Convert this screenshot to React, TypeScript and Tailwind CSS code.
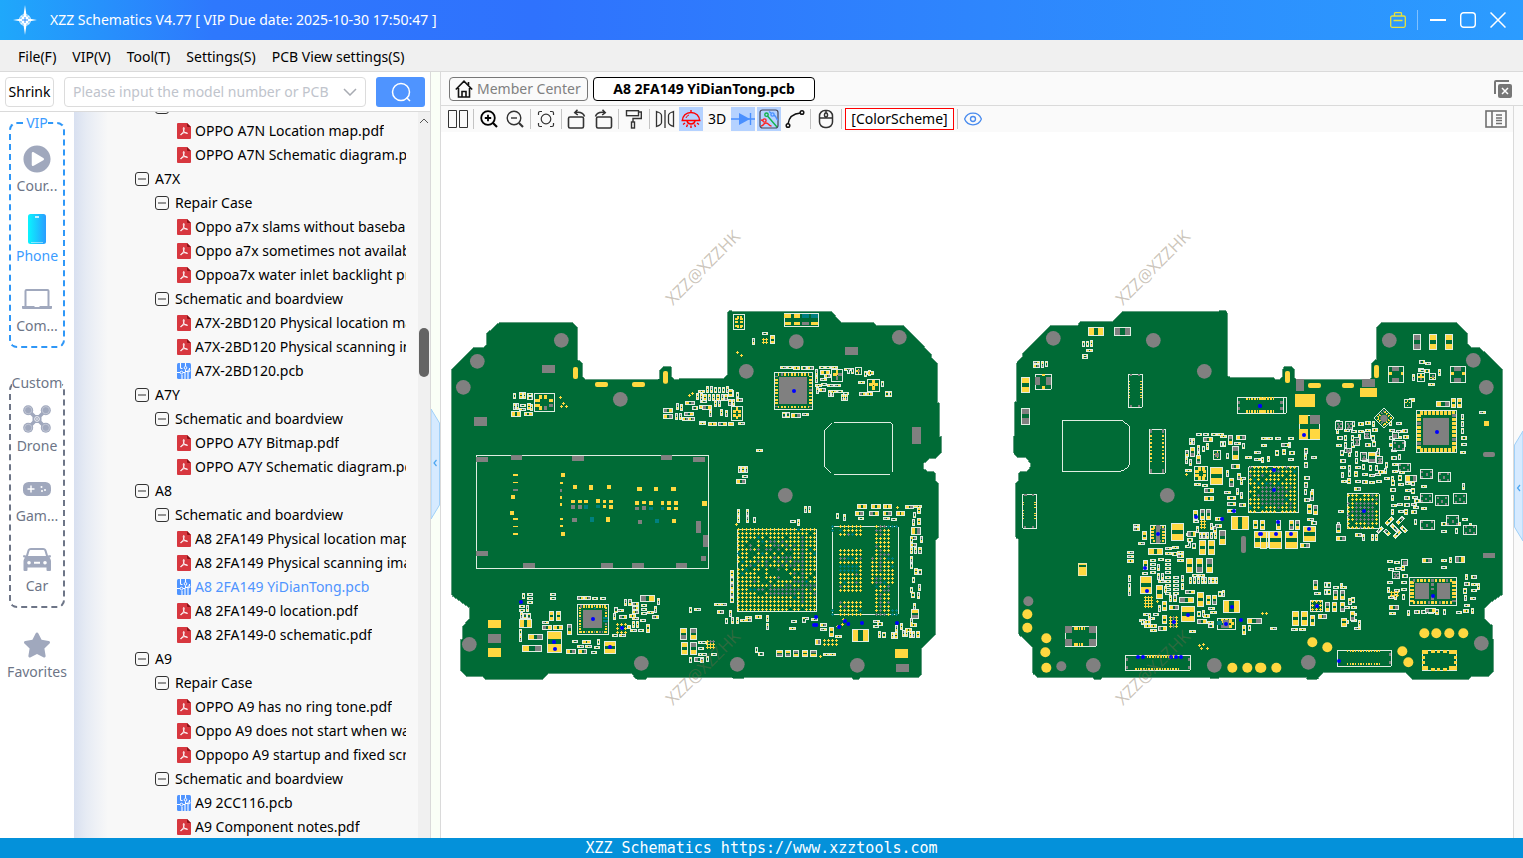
import React from "react";
import { Eye } from "lucide-react";
import { FaPlayCircle, FaStar } from "react-icons/fa";

/* ------------------------------------------------------------------ */
/* Board drawing                                                       */
/* ------------------------------------------------------------------ */

const GREEN = "#006b36";
const YELLOW = "#ffd840";
const GRAY = "#808080";
const WHITE = "#e0ede2";
const TEAL = "#008080";
const BLUE = "#0000ff";

type Rect = [number, number, number, number];

const noise = (a: number, b: number) => {
  const v = Math.sin(a * 12.9898 + b * 78.233) * 43758.5453;
  return v - Math.floor(v);
};

const nums = (s: string) => s.trim().split(/[ ,]+/).map(Number);

const pairs = (s: string): [number, number][] => {
  const n = nums(s);
  const out: [number, number][] = [];
  for (let i = 0; i + 1 < n.length; i += 2) out.push([n[i], n[i + 1]]);
  return out;
};

const quads = (s: string): Rect[] => {
  const n = nums(s);
  const out: Rect[] = [];
  for (let i = 0; i + 3 < n.length; i += 4) out.push([n[i], n[i + 1], n[i + 2], n[i + 3]]);
  return out;
};

const shift = (s: string, dx: number) => pairs(s).map(([x, y]) => `${x + dx},${y}`).join(" ");

const box = ([x, y, w, h]: Rect) => `M${x} ${y}h${w}v${h}h${-w}z`;

/** Two-terminal parts: outline, body and a pad at either end. */
function Chips({ list, tone = "mix" }: { list: Rect[]; tone?: "mix" | "yellow" | "gray" }) {
  let white = "";
  let body = "";
  let yellow = "";
  let gray = "";
  list.forEach((r) => {
    const [x, y, w, h] = r;
    white += box(r);
    const i: Rect = [x + 3, y + 3, w - 6, h - 6];
    body += box(i);
    const vert = h > w;
    const p = Math.max(4, Math.round((vert ? i[3] : i[2]) * 0.36));
    const a: Rect = vert ? [i[0], i[1], i[2], p] : [i[0], i[1], p, i[3]];
    const b: Rect = vert ? [i[0], i[1] + i[3] - p, i[2], p] : [i[0] + i[2] - p, i[1], p, i[3]];
    const n = noise(x, y);
    const ga = tone === "gray" || (tone === "mix" && n < 0.28);
    const gb = tone === "gray" || (tone === "mix" && n > 0.68);
    if (ga) gray += box(a);
    else yellow += box(a);
    if (gb) gray += box(b);
    else yellow += box(b);
  });
  return (
    <g>
      <path d={white} fill={WHITE} />
      <path d={body} fill={GREEN} />
      <path d={yellow} fill={YELLOW} />
      <path d={gray} fill={GRAY} />
    </g>
  );
}

/** Small parts given by centre; upright ones and flat ones apart. */
function Smalls({ v = "", h = "" }: { v?: string; h?: string }) {
  const list: Rect[] = [
    ...(v ? pairs(v).map(([x, y]): Rect => [x - 5, y - 10, 10, 20]) : []),
    ...(h ? pairs(h).map(([x, y]): Rect => [x - 10, y - 5, 20, 10]) : []),
  ];
  return <Chips list={list} />;
}

/** A crowded area of small parts. */
function Crowd({ areas, fill = 0.72 }: { areas: string; fill?: number }) {
  const list: Rect[] = [];
  quads(areas).forEach(([x0, y0, w, h]) => {
    for (let y = y0; y < y0 + h - 8; y += 21)
      for (let x = x0; x < x0 + w - 8; x += 21) {
        const n = noise(x + 3, y + 7);
        if (n > fill) continue;
        const jx = Math.round(noise(y, x) * 4);
        const jy = Math.round(noise(x, y) * 4);
        if (n < fill / 2) list.push([x + jx, y + jy, 10, 18]);
        else list.push([x + jx, y + 4 + jy, 18, 10]);
      }
  });
  return <Chips list={list} />;
}

/** Square package with leads on the four sides and a thermal pad. */
function Quad({ r, pad, step = 12, lead = 6 }: { r: Rect; pad?: string; step?: number; lead?: number }) {
  const [x, y, w, h] = r;
  let yellow = "";
  let gray = "";
  const put = (b: Rect) => {
    if (noise(b[0], b[1]) > 0.84) gray += box(b);
    else yellow += box(b);
  };
  const d = Math.round(lead * 1.6);
  for (let i = x + step; i < x + w - step; i += step) {
    put([i, y + 3, lead, d]);
    put([i, y + h - d - 3, lead, d]);
  }
  for (let j = y + step; j < y + h - step; j += step) {
    put([x + 3, j, d, lead]);
    put([x + w - d - 3, j, d, lead]);
  }
  return (
    <g>
      <rect x={x} y={y} width={w} height={h} fill={GREEN} stroke={WHITE} strokeWidth={3} />
      <path d={yellow} fill={YELLOW} />
      <path d={gray} fill={GRAY} />
      {pad && <path d={quads(pad).map(box).join("")} fill={GRAY} />}
    </g>
  );
}

/** Ball grid. `tone` picks the net colour of a ball, or leaves it out. */
function Balls({ x, y, cols, rows, p, tone }: {
  x: number; y: number; cols: number; rows: number; p: number; tone: (c: number, r: number) => string;
}) {
  const d: Record<string, string> = { y: "", g: "", t: "" };
  for (let r = 0; r < rows; r++)
    for (let c = 0; c < cols; c++) {
      const t = tone(c, r);
      if (t === "") continue;
      const cx = x + c * p;
      const cy = y + r * p;
      d[t] += box([cx - 4.5, cy - 1.5, 9, 3]) + box([cx - 1.5, cy - 4.5, 3, 9]);
    }
  return (
    <g>
      <path d={d.y} fill={YELLOW} />
      <path d={d.g} fill={GRAY} />
      <path d={d.t} fill={TEAL} />
    </g>
  );
}

const Blocks = ({ d, fill }: { d: string; fill: string }) => <path d={quads(d).map(box).join("")} fill={fill} />;
const Frames = ({ d }: { d: string }) => (
  <path d={quads(d).map(box).join("")} fill="none" stroke={WHITE} strokeWidth={3} />
);
const Dots = ({ at, r, fill }: { at: string; r: number; fill: string }) => (
  <g fill={fill} shapeRendering="auto">
    {pairs(at).map(([x, y]) => (
      <circle key={`${x}-${y}`} cx={x} cy={y} r={r} />
    ))}
  </g>
);
const Crosses = ({ at }: { at: string }) => (
  <path d={pairs(at).map(([x, y]) => `M${x - 5} ${y}h10M${x} ${y - 5}v10`).join("")} stroke={YELLOW} strokeWidth={3} />
);
const Slots = ({ d, fill }: { d: string; fill: string }) => (
  <g fill={fill} shapeRendering="auto">
    {quads(d).map(([x, y, w, h]) => (
      <rect key={`${x}-${y}`} x={x} y={y} width={w} height={h} rx={6} />
    ))}
  </g>
);

const TOP_OUTLINE = [
  shift("162,68 382,68 397,82 397,177 412,190 412,230 420,238 640,238 645,232 645,210 655,199 678,199 680,230 688,238 700,238 705,236", 0),
  shift("72,235 82,225 82,38 88,31 103,35 395,35 423,67 520,67 528,76 610,76 694,162 694,172 713,191 713,308 718,308 718,408 725,410 725,458 708,475 690,475 670,492 670,505 682,514 700,514 707,520 707,542 716,551 716,712 707,720 707,1003 664,1045 664,1125 655,1133 482,1133 475,1138 460,1138 455,1133 135,1133 130,1136 100,1136 97,1133", 765),
  shift("608,1132 603,1138 575,1138 558,1120 310,1120 290,1140 123,1140 113,1129 65,1129 47,1113 47,1018 53,1016 53,978 74,956 74,924 22,888 20,880 20,208 85,143 115,143 125,132 125,100", 0),
].join(" ");

const BOTTOM_OUTLINE = [
  shift("137,76 218,76 226,65 322,65 352,35 640,35 645,31 660,31 667,38 667,225 675,232", 0),
  shift("40,232 47,238 60,238 67,230 67,208 75,199 95,199 103,207 103,232 110,238 330,238 335,230 335,190 350,177 350,82 365,68 590,68 623,100 623,132 635,143 660,143 728,208 728,883 690,908 673,925 673,956 698,978 698,1016 701,1018 701,1115 685,1129 635,1130 625,1138 457,1138 438,1118 190,1118 172,1138 142,1138 138,1132", 765),
  shift("645,1133 640,1136 618,1136 613,1133 293,1133 287,1138 268,1138 263,1133 98,1133 83,1120 83,1042 41,1003 41,720 32,712 32,550 41,540 41,520 47,514 66,514 77,500 77,490 62,474 40,474 26,460 26,408 29,406 29,305 35,303 35,188 53,170 53,160", 0),
].join(" ");

function TopLeft() {
  return (
    <g>
      <Dots at="349,121 97,184 55,262 526,298 73,1033 589,1090" r={22} fill={GRAY} />
      <Blocks d="291,195,39,24 87,351,39,26 129,1002,39,27" fill={GRAY} />
      <Blocks d="129,960,39,24 129,1044,39,27" fill={YELLOW} />
      <Slots d="384,201,15,36 450,246,39,15 561,246,39,15 654,213,15,38" fill={YELLOW} />
      <Frames d="94,466,697,339" />
      <Blocks d="94,471,35,15 198,465,33,15 381,468,36,15 648,465,33,15 744,471,35,15 94,753,35,15 234,789,36,15 468,789,36,15 561,789,36,15 693,789,33,15 753,663,15,36 774,705,15,36 768,768,15,15 204,567,15,6 345,567,6,8 378,615,12,12 399,615,12,12 381,654,15,12 570,621,12,9 591,618,12,12 579,660,12,12" fill={GRAY} />
      <Blocks d="204,522,15,6 204,546,15,3 198,585,12,12 195,633,12,12 204,654,15,6 204,678,15,3 204,699,15,6 348,519,12,12 345,546,9,6 345,588,6,9 345,609,6,9 345,654,9,6 345,675,9,6 348,696,12,12 384,555,12,12 432,555,12,15 486,555,12,12 378,600,12,9 399,600,12,9 417,600,12,9 453,597,12,12 474,600,9,9 492,600,12,9 474,615,9,9 492,615,12,12 483,651,12,15 576,561,15,12 627,561,12,12 678,561,15,12 570,603,12,12 591,603,12,9 612,603,12,12 648,603,9,12 666,603,12,12 687,603,12,12 666,621,12,9 687,621,12,9 681,657,12,12 771,603,15,15" fill={YELLOW} />
      <Blocks d="417,615,12,12 453,615,12,9 435,651,12,15 612,621,12,9 648,621,9,9 630,657,12,12" fill={TEAL} />
      <Smalls
        v="208,288 228,286 239,286 208,320 218,320 252,320 259,322 235,888 247,926 230,946 240,948 252,948 227,996 227,1016 513,930 541,908 555,908 508,950 566,974 577,974 631,928 640,905 757,290 770,300 698,320 709,322 695,350 706,350 736,930 736,1080 460,1026 770,290"
        h="255,283 255,294 234,316 233,328 255,883 255,895 255,907 231,919 231,931 324,884 324,895 301,967 406,894 427,894 450,895 474,895 526,932 510,1006 533,1006 572,912 572,924 572,936 562,948 572,956 597,916 597,928 597,940 594,961 566,991 588,991 631,951 617,938 407,1040 390,1024 430,1040 456,1042 447,1058 757,928 768,1028 768,1045 768,1063 770,275 722,357 740,357 750,324 772,367"
      />
      <Chips list={quads("198,333,29,17 237,335,26,12 312,932,15,30 333,932,15,30 222,956,38,27 291,975,29,14 323,975,30,14 249,1001,44,19 231,1034,60,23 366,972,15,32 585,885,45,20 522,944,25,13 603,972,11,26 363,1048,30,13 400,1048,27,13 411,1019,27,12 705,984,20,36 735,984,20,36 708,1026,20,38 735,1026,20,38 747,1072,29,15 654,324,30,15 654,341,30,15 717,335,30,12 720,303,30,12 545,974,12,14")} />
      <Quad r={[268, 282, 60, 52]} step={15} lead={8} />
      <Quad r={[398, 913, 92, 90]} pad="414,930,57,54" step={8} lead={5} />
      <Chips tone="yellow" list={[[306, 992, 44, 66], [476, 1023, 36, 38]]} />
      <Blocks d="447,921,6,5 474,951,15,5 474,960,15,5" fill={TEAL} />
      <Balls x={517.5} y={973.5} cols={3} rows={3} p={12} tone={() => "y"} />
      <Crosses at="346,292 355,310 349,319 364,319 733,286 742,280" />
      <Dots at="228,906 444,957 327,1026 330,1047 495,1041 531,984" r={6} fill={BLUE} />
    </g>
  );
}

const cpuTone = (c: number, r: number) => {
  const n = noise(c + 1, r + 2);
  if (c === 16 && r > 1 && r < 19) return "g";
  if (r > 13 && r < 17 && c > 7) return n > 0.4 ? "g" : "y";
  if (c < 3 || r < 3 || c > 16 || r > 16) return n > 0.95 ? "t" : n < 0.03 ? "" : "y";
  if (n < 0.24) return "";
  if (c < 7 && n > 0.86) return "t";
  return n > 0.7 ? "g" : "y";
};

const ramTone = (c: number, r: number) => {
  if ((c === 0 && (r < 2 || r > 20)) || (c > 14 && (r < 1 || r > 20))) return "t";
  const left = c > 1 && c < 8 && (r < 3 || (r > 5 && r < 17) || r > 18);
  const right = c > 10 && c < 15;
  if (!left && !right && !((c === 10 || c === 15) && r > 7 && r < 15)) return "";
  if (left && (r === 10 || r === 11)) return c < 7 ? "t" : "y";
  const n = noise(c, r + 9);
  if (c === 12 && n > 0.3) return "g";
  return n > 0.95 ? "t" : n > 0.82 ? "g" : "y";
};

function TopRight() {
  return (
    <g>
      <Dots at="289,125 598,112 139,214 256,586 112,1093 472,1096" r={22} fill={GRAY} />
      <Blocks d="435,141,39,24 636,381,27,51 588,1092,39,24 0,471,15,15 0,663,3,36 9,705,15,36 3,768,15,15" fill={GRAY} />
      <Blocks d="585,1047,39,27 6,603,15,15" fill={YELLOW} />
      <Frames d="253,42,103,37 112,688,238,246 397,680,198,263" />
      <Blocks d="253,42,20,12 282,42,18,12 255,66,18,9 282,66,18,9 333,66,21,9" fill={YELLOW} />
      <Blocks d="306,42,21,12 333,42,21,12" fill={TEAL} />
      <Blocks d="306,66,21,9" fill={GRAY} />
      <path d="M402 367H570L578 375V516M570 523H402M392 517L374 500V390L397 368" fill="none" stroke={WHITE} strokeWidth={3} />
      <Quad r={[101, 44, 32, 44]} step={10} lead={6} />
      <Quad r={[223, 217, 115, 111]} pad="237,231,84,81" step={10} lead={5} />
      <Quad r={[95, 319, 32, 42]} step={12} lead={7} />
      <Quad r={[395, 208, 34, 36]} step={12} lead={8} />
      <Quad r={[504, 238, 34, 36]} step={12} lead={8} />
      <Quad r={[466, 203, 18, 22]} step={8} lead={4} />
      <Smalls
        v="160,125 22,268 34,268 46,270 58,270 70,270 82,268 96,280 112,285 15,292 28,292 41,292 54,292 67,292 78,292 46,311 58,311 90,308 100,308 64,338 80,340 32,341 349,218 349,238 352,272 388,280 398,280 446,213 457,213 496,222 508,219 548,252 561,282 571,282 434,292 428,292 439,293 252,345 264,345 118,509 129,509 139,509 115,638 142,638 115,658 142,658 163,660 316,629 328,629 295,668 96,820 96,840 96,860 96,880 96,900 79,963 98,961 112,961 202,956 202,979 92,940 412,648 433,653 641,668 657,632 657,665 644,645 635,720 664,718 634,752 647,752 660,752 635,778 635,798 648,815 660,816 641,840 658,862 639,885 656,886 634,870 644,920 635,965 604,980 590,985 539,1003 552,1005 578,1006 588,1006 610,1000 620,1000 631,1004 641,1003 654,1003 170,1050 312,960"
        h="195,100 250,203 270,203 290,204 312,204 332,204 366,203 384,203 403,203 370,238 372,254 392,256 412,256 356,256 368,270 400,274 420,274 382,228 442,208 512,219 485,247 438,280 488,282 508,282 12,305 8,321 118,300 316,343 8,370 124,370 178,451 135,529 279,664 52,913 70,913 62,936 130,962 146,952 175,951 145,960 282,965 278,985 316,955 343,958 371,975 371,988 380,1063 398,1063 42,1063 183,1062 483,655 560,655 582,659 656,620 640,620 640,714 640,735 530,965 540,972 528,979 641,975 625,990 416,1010 12,1028 12,1063"
      />
      <Chips list={quads("210,105,15,28 5,315,30,14 25,366,25,12 54,366,26,12 85,366,16,12 273,339,29,14 360,210,30,14 108,538,29,14 470,612,30,14 513,612,30,14 549,612,27,14 465,633,27,14 507,633,30,14 548,633,28,14 588,633,27,14 615,615,27,12 388,982,13,28 346,1018,16,16 229,1049,19,22 254,1049,19,22 279,1049,19,22 305,1049,19,22 331,1049,19,22 632,680,30,24 634,928,22,30 18,1068,10,18 0,1074,12,14 84,268,14,24")} />
      <Balls x={115.5} y={688.5} cols={20} rows={21} p={12} tone={cpuTone} />
      <Balls x={397.5} y={679.5} cols={17} rows={23} p={12} tone={ramTone} />
      <Balls x={22.500} y={1023.5} cols={3} rows={3} p={9} tone={(c, r) => (r ? "y" : c ? "g" : "y")} />
      <Balls x={373.5} y={1021.5} cols={4} rows={2} p={12} tone={() => "y"} />
      <Balls x={190.5} y={117.5} cols={2} rows={2} p={9} tone={() => "y"} />
      <Chips tone="yellow" list={[[457, 988, 49, 37]]} />
      <Crosses at="112,157 124,166 110,673 592,622 431,959 427,973 412,980 361,1069" />
      <Dots at="282,273 348,951 342,975 349,975 435,963 445,972 417,981 486,969 591,969" r={6} fill={BLUE} />
    </g>
  );
}

function BottomLeft() {
  return (
    <g>
      <Dots at="145,115 445,121 598,214 487,586 265,1096 628,1096" r={22} fill={GRAY} />
      <Dots at="70,904 169,1099" r={15} fill={GRAY} />
      <Dots at="67,943 67,983 124,1015 121,1057 124,1103 682,1103 727,1103 765,1103" r={15} fill={YELLOW} />
      <Slots d="708,708,15,51" fill={GRAY} />
      <path d="M173 515V361H352L374 380V490Q372 505 345 515Z" fill="none" stroke={WHITE} strokeWidth={3} />
      <Frames d="370,223,42,99 433,388,48,132 53,583,42,102 697,292,147,48 361,1066,195,45 181,979,93,60 91,223,48,45" />
      <Blocks d="371,243,4,3 371,251,4,3 371,260,4,3 371,268,4,3 371,276,4,3 371,284,4,3 371,292,4,3 405,243,6,3 405,251,6,3 405,260,6,3 405,268,6,3 405,276,6,3 405,284,6,3 405,292,6,3 434,405,6,5 434,416,6,5 434,427,6,5 434,438,6,5 434,449,6,5 434,460,6,5 434,471,6,5 434,482,6,5 470,405,8,5 470,416,8,5 470,427,8,5 470,438,8,5 470,449,8,5 470,460,8,5 470,471,8,5 470,482,8,5 54,605,4,3 54,613,4,3 54,630,4,3 54,638,4,3 54,646,4,3 54,654,4,3 87,605,6,3 87,613,6,3 87,622,6,3 87,638,6,3 87,646,6,3 87,654,6,3 207,981,5,9 214,981,5,9 221,981,5,9 228,981,5,9 236,981,5,9 207,1029,5,9 214,1029,5,9 221,1029,5,9 228,1029,5,9 111,223,9,6 111,258,9,9" fill={YELLOW} />
      <Blocks d="181,979,20,20 252,979,21,20 181,1018,20,20 252,1018,21,20 91,231,14,24 123,231,15,24 374,223,6,5 398,223,6,5 374,316,6,5 398,316,6,5 434,388,8,10 470,388,8,10 434,507,8,11 470,507,8,11 57,583,9,6 81,583,6,6 57,679,6,6 81,679,6,6 698,304,7,9 698,321,7,9 362,1074,7,8 362,1098,7,8 548,1074,7,8 548,1098,7,8" fill={GRAY} />
      <path d="M723 296H780M723 335H780M390 1107H525M425 1069H510" stroke={YELLOW} strokeWidth={8} strokeDasharray="5 3" />
      <Chips tone="yellow" list={quads("249,81,48,26 48,231,27,47 616,502,37,52 498,670,38,52 679,648,52,41 406,828,36,53 529,918,40,49 655,901,49,37 748,693,44,52")} />
      <Chips tone="gray" list={quads("328,81,49,26 48,324,27,50")} />
      <rect x={220} y={790} width={25} height={37} fill={YELLOW} stroke={WHITE} strokeWidth={2} />
      <rect x={221} y={795} width={23} height={6} fill={GREEN} />
      <Smalls
        v="236,132 247,132 259,130 112,193 124,192 546,460 580,445 595,447 607,440 650,432 659,432 667,468 545,482 556,488 667,520 702,530 710,545 698,575 710,586 556,425 565,425 619,680 630,688 577,688 586,706 597,706 608,706 620,706 631,706 567,738 554,735 373,835 373,858 373,878 461,802 472,830 460,830 482,868 532,836 532,860 556,842 568,842 580,842 592,842 602,842 614,842 624,842 634,842 645,882 655,880 497,895 510,895 463,925 582,942 595,940 733,984 715,438 580,465 580,480"
        h="95,188 95,198 240,166 253,151 240,173 582,403 603,403 627,403 646,403 655,410 697,430 730,472 757,457 757,478 551,511 578,553 600,556 712,535 667,577 712,615 394,676 394,687 409,730 377,758 377,770 377,783 444,782 444,794 444,806 444,818 468,778 489,782 489,794 489,806 489,818 489,832 489,844 489,856 489,868 489,880 511,742 491,746 527,757 527,768 527,781 491,760 510,762 573,664 640,678 640,657 549,740 555,720 513,832 513,844 513,856 513,868 513,880 420,820 570,826 590,826 470,845 425,944 412,961 453,944 440,955 428,966 446,978 428,978 617,967 618,978 562,994 620,926 605,948 446,992 625,938"
      />
      <Crowd areas="540,690,30,40 405,935,60,50" fill={0.3} />
      <Chips list={quads("593,411,30,15 669,405,15,29 693,405,29,14 682,438,20,43 555,440,14,30 573,465,14,28 678,492,26,14 673,534,15,26 597,564,30,15 597,587,30,15 665,588,29,13 665,606,29,13 411,693,14,28 429,744,44,20 564,630,16,30 585,627,14,32 603,627,14,32 643,690,19,45 582,720,20,44 609,720,20,44 543,774,20,45 573,774,20,45 603,774,20,45 414,780,14,30 453,855,20,43 522,891,44,17 576,876,20,45 603,885,14,30 621,885,14,30 471,904,14,28 491,915,30,14 471,945,14,28 459,979,26,13 575,957,30,14 725,954,45,17 711,975,11,29 546,693,28,19 540,870,29,12 666,627,28,13 744,660,15,28 765,660,15,28")} />
      <Quad r={[568, 499, 39, 43]} step={12} lead={7} />
      <Quad r={[436, 676, 47, 54]} pad="453,676,13,53" step={9} lead={5} />
      <Quad r={[625, 451, 21, 27]} pad="631,458,10,12" step={10} lead={3} />
      <Quad r={[637, 955, 54, 33]} pad="655,960,17,24" step={12} lead={7} />
      <Blocks d="637,962,14,14" fill={TEAL} />
      <Balls x={421.5} y={892.5} cols={3} rows={4} p={9} tone={() => "y"} />
      <Balls x={496.5} y={952.5} cols={3} rows={4} p={9} tone={(c) => (c === 1 ? "g" : "y")} />
      <Balls x={589.5} y={664.5} cols={2} rows={3} p={9} tone={() => "y"} />
      <Crosses at="544,523 457,904 772,940 584,1036 596,1033 590,1046 607,1045" />
      <Dots at="765,318 573,651 651,657 687,633 459,702 420,804 426,873 549,945 507,966 681,921 663,972 708,960 399,1071 414,1071 498,1071 513,1071 528,1071 765,702" r={6} fill={BLUE} />
    </g>
  );
}

const apTone = (c: number, r: number) => {
  const n = noise(c + 5, r + 1);
  if (r > 4 && r < 10 && c > 2 && c < 9) return "g";
  if (n < 0.12) return "";
  return n > 0.92 ? "t" : n > 0.8 ? "g" : "y";
};
const pmTone = (c: number, r: number) => {
  if (c > 1 && c < 7 && r > 1 && r < 7) return "g";
  return noise(c, r + 4) > 0.9 ? "g" : noise(c, r + 4) < 0.08 ? "" : "y";
};

function BottomRight() {
  return (
    <g>
      <Dots at="388,121 640,181 679,262 220,298 664,1030 145,1087" r={22} fill={GRAY} />
      <Dots at="157,1027 202,1042 427,1054 445,1087 493,1000 529,1000 568,1000 610,1000 4,1103 49,1103" r={15} fill={YELLOW} />
      <Slots d="75,213,15,36 144,249,39,15 246,249,36,15 342,195,15,39" fill={YELLOW} />
      <Slots d="669,456,36,15" fill={GRAY} />
      <Blocks d="105,282,60,39 300,264,51,27 672,363,15,15" fill={YELLOW} />
      <Blocks d="108,237,24,36 306,237,39,24 669,759,36,15" fill={GRAY} />
      <Crowd areas="228,360,120,90 240,450,120,95 350,440,75,100 385,360,66,80 390,540,80,100" fill={0.88} />
      <Crowd areas="130,440,45,160 0,405,105,75 600,340,25,120" fill={0.72} />
      <Crowd areas="380,775,70,115 520,770,60,50 610,820,45,100 440,925,170,28 610,920,30,20" fill={0.8} />
      <Crowd areas="230,580,20,110 460,550,30,130 540,660,60,35 605,625,45,60" fill={0.5} />
      <Crowd areas="228,890,60,80 392,290,30,20 445,290,70,20 470,180,50,50 195,848,70,20" fill={0.62} />
      <Smalls
        v="460,233 538,218 196,855 207,855 196,876 207,876 610,560 298,970 337,713 349,713 655,860 310,713 270,905"
        h="514,253 292,567 295,705 668,338 293,985 41,985 104,988 128,988 152,658 162,669 398,940 172,880 486,186 486,211 228,862 250,862"
      />
      <Chips list={quads("528,304,42,18 574,294,13,29 592,294,13,29 86,660,15,29 106,660,15,29 0,660,14,29 150,573,12,29 141,612,15,29 159,615,15,29 48,660,14,29 228,708,29,14 228,672,14,28 120,729,29,14 159,840,15,30 219,870,14,30 240,870,14,30 195,906,14,30 216,906,14,30 240,906,14,30 150,945,14,32 174,942,27,14 243,954,17,26 270,933,14,30 387,915,30,15 63,429,28,12 486,775,29,15 495,925,32,14 586,768,28,22 436,526,36,20 323,456,25,34")} />
      <Chips tone="gray" list={[[459, 102, 24, 48]]} />
      <Chips tone="yellow" list={quads("507,102,24,48 555,102,24,48 0,693,20,53 27,693,38,53 75,693,38,53 129,678,38,49 95,933,22,44 123,933,20,44")} />
      <Frames d="385,199,46,48 571,199,46,48 -68,292,139,48 232,1051,162,48 487,1051,103,60 118,346,61,72" />
      <Blocks d="396,201,22,12 396,234,22,12 583,201,21,12 583,234,21,12 61,303,8,8 61,320,8,9 150,346,29,26 387,1059,7,8 387,1084,7,8" fill={GRAY} />
      <Blocks d="118,346,26,26 118,388,26,30 150,388,29,30 387,216,8,9 422,216,8,9 573,216,8,9 607,216,8,9 487,1051,17,12 513,1051,12,8 532,1051,9,8 550,1051,12,8 567,1051,23,12 487,1068,8,10 487,1084,8,8 582,1068,8,10 582,1084,8,8 487,1098,17,12 513,1104,12,8 532,1104,9,8 550,1104,12,8 567,1098,23,12" fill={YELLOW} />
      <path d="M0 296H42M0 335H42" stroke={YELLOW} strokeWidth={8} strokeDasharray="7 3" />
      <path d="M261 1053H366M261 1092H366" stroke={YELLOW} strokeWidth={5} strokeDasharray="4 4" />
      <Quad r={[472, 220, 22, 24]} step={8} lead={5} />
      <Quad r={[508, 222, 20, 18]} step={8} lead={5} />
      <Quad r={[433, 298, 21, 24]} step={8} lead={3} />
      <Quad r={[469, 331, 121, 127]} pad="489,354,78,81" step={12} lead={7} />
      <Quad r={[448, 833, 142, 83]} pad="465,848,42,48 531,848,39,48 513,850,9,8 513,863,9,8 513,888,9,12" step={11} lead={7} />
      <g transform="rotate(-45 373 354)">
        <Quad r={[352, 333, 42, 42]} step={8} lead={4} />
      </g>
      <Dots at="372,355" r={11} fill={GRAY} />
      <g transform="rotate(-45 405 680)">
        <Chips list={quads("390,650,30,12 395,668,12,28 415,672,28,12 370,665,12,22 380,695,28,12 412,692,12,24 355,650,22,10")} />
      </g>
      {quads("398,422,36,30 415,490,36,24 481,509,38,26 535,517,36,27 481,582,36,26 527,588,38,28 581,582,38,28 481,661,42,27 559,648,38,28 611,676,38,27 228,366,20,22 258,366,20,22 313,395,18,22 282,413,18,24 255,445,20,14 302,457,18,26 351,470,18,20 397,398,18,18 426,780,18,18 398,815,22,20").map((r) => (
        <g key={`${r[0]}-${r[1]}`}>
          <rect x={r[0]} y={r[1]} width={r[2]} height={r[3]} fill={GREEN} stroke={WHITE} strokeWidth={3} />
          <path
            d={[
              [r[0] + 3, r[1] + 3, 6, 6],
              [r[0] + r[2] - 9, r[1] + 3, 6, 6],
              [r[0] + 3, r[1] + r[3] - 8, 6, 6],
              [r[0] + r[2] - 9, r[1] + r[3] - 8, 6, 6],
              [r[0] + r[2] / 2 - 3, r[1] + r[3] / 2 - 2, 6, 8],
            ].map((q) => box(q as Rect)).join("")}
            fill={GRAY}
          />
        </g>
      ))}
      <Frames d="-33,500,149,138 262,582,96,103" />
      <rect x={-32} y={501} width={146} height={136} fill={GREEN} />
      <Balls x={-28.5} y={502.5} cols={12} rows={12} p={12} tone={apTone} />
      <Balls x={265.5} y={586.5} cols={8} rows={9} p={12} tone={pmTone} />
      <rect x={152} y={901} width={36} height={34} fill={GREEN} stroke={WHITE} strokeWidth={3} />
      <Balls x={157.5} y={904.5} cols={3} rows={3} p={12} tone={() => "y"} />
      <Balls x={394.5} y={877.5} cols={3} rows={2} p={9} tone={() => "y"} />
      <Crosses at="7,940 19,940" />
      <Dots at="132,405 42,510 42,570 531,396 312,633 54,666 147,687 3,702 48,702 93,702 519,888 171,918 237,1083 0,318" r={6} fill={BLUE} />
    </g>
  );
}

function BoardView() {
  return (
    <svg viewBox="441 132 1072 706" className="h-full w-full" shapeRendering="crispEdges" role="img" aria-label="A8 2FA149 board view">
      <g transform="translate(445 300) scale(0.33333)">
        <polygon points={TOP_OUTLINE} fill={GREEN} stroke="#5f9c7e" strokeWidth={3} />
        <TopLeft />
        <g transform="translate(765 0)">
          <TopRight />
        </g>
      </g>
      <g transform="translate(1005 300) scale(0.33333)">
        <polygon points={BOTTOM_OUTLINE} fill={GREEN} stroke="#5f9c7e" strokeWidth={3} />
        <BottomLeft />
        <g transform="translate(765 0)">
          <BottomRight />
        </g>
      </g>
      <g fill="#7a6a50" fillOpacity={0.4} fontFamily="'Open Sans', sans-serif" fontSize={17}>
        {[[673, 306], [1123, 306], [673, 706], [1123, 706]].map(([x, y]) => (
          <text key={`${x}-${y}`} transform={`translate(${x} ${y}) rotate(-45)`}>XZZ@XZZHK</text>
        ))}
      </g>
    </svg>
  );
}

/* ------------------------------------------------------------------ */
/* Icons                                                               */
/* ------------------------------------------------------------------ */

const Logo = () => (
  <svg viewBox="0 0 24 30" className="h-[30px] w-6" aria-hidden="true">
    <circle cx="12" cy="15" r="5.5" fill="none" stroke="#fff" strokeWidth="1.2" opacity=".75" />
    <path d="M12 0l1.700 11.500L16 11l-.700 2.400L24 15l-8.700 1.600L16 19l-2.300-.5L12 30l-1.700-11.500L8 19l.7-2.400L0 15l8.700-1.600L8 11l2.300.5z" fill="#fff" />
    <path d="M12 12v6M9 15h6" stroke="#2a8cfb" strokeWidth="1" />
  </svg>
);

const PdfIcon = () => (
  <svg viewBox="0 0 14 16" className="h-4 w-3.5 shrink-0" aria-hidden="true">
    <path d="M1 0h9l4 4v11a1 1 0 0 1-1 1H1a1 1 0 0 1-1-1V1a1 1 0 0 1 1-1z" fill="#d7373f" />
    <path d="M10 0l4 4h-3a1 1 0 0 1-1-1z" fill="#8c1218" />
    <path d="M6.700 4.500c.9 0 .5 2-.2 3.700-.6 1.600-1.700 3.800-2.600 3.800-.9-.3.300-1.700 2.900-2.200 2-.4 3.900-.2 3.700.5-.3.700-2.200-.2-3.200-1.400-.9-1.200-1.400-4.100-.6-4.400z" fill="none" stroke="#fff" strokeWidth="1" />
  </svg>
);

const PcbIcon = () => (
  <svg viewBox="0 0 14 16" className="h-4 w-3.5 shrink-0" aria-hidden="true">
    <rect width="14" height="16" rx="1.500" fill="#4f94ff" />
    <path d="M3.500 0v4.500a1 1 0 0 0 1 1h1M8.500 0v3M8.500 6.500v2h3M0 9.500h3M5.500 9.500h2.500V16M5 11.500V16M11 16v-7M12.500 5v2.500" fill="none" stroke="#fff" strokeWidth="1.100" />
    <g fill="#4f94ff" stroke="#fff" strokeWidth="1">
      <circle cx="8.500" cy="4.800" r="1.300" />
      <circle cx="4.500" cy="9.500" r="1.300" />
      <circle cx="12" cy="7.800" r="1" />
    </g>
  </svg>
);

const Minus = () => (
  <svg viewBox="0 0 14 14" className="h-3.5 w-3.5 shrink-0" fill="none" stroke="#333" aria-hidden="true">
    <rect x=".5" y=".5" width="13" height="13" rx="2.500" />
    <path d="M3 7h8" />
  </svg>
);

const PhoneIcon = () => (
  <svg viewBox="0 0 18 30" className="h-[30px] w-[18px]" aria-hidden="true">
    <defs>
      <linearGradient id="phone" x1="0" x2="1">
        <stop offset="0" stopColor="#0af4fe" />
        <stop offset="1" stopColor="#2a9dff" />
      </linearGradient>
    </defs>
    <rect width="18" height="30" rx="2.500" fill="url(#phone)" />
    <path d="M7 3h4" stroke="#fff" strokeWidth="1.500" />
    <path d="M3 28.500h12" stroke="#fff" strokeWidth=".6" opacity=".8" />
  </svg>
);

const LaptopIcon = () => (
  <svg viewBox="0 0 30 20" className="h-5 w-[30px]" aria-hidden="true">
    <path d="M3.500 17V2a1 1 0 0 1 1-1h21a1 1 0 0 1 1 1v15" fill="none" stroke="#a0a8bd" strokeWidth="2" />
    <path d="M0 17h12l1 1h4l1-1h12v2a1 1 0 0 1-1 1H1a1 1 0 0 1-1-1z" fill="#a0a8bd" />
  </svg>
);

const DroneIcon = () => (
  <svg viewBox="0 0 28 28" className="h-7 w-7" aria-hidden="true">
    <path d="M5 5l7 7h4l7-7M5 23l7-7h4l7 7" stroke="#a0a8bd" strokeWidth="3.600" fill="none" />
    <rect x="9.500" y="10" width="9" height="8" rx="3" fill="#a0a8bd" />
    {[[5.2, 5.2], [22.8, 5.2], [5.2, 22.8], [22.8, 22.8]].map(([x, y]) => (
      <g key={`${x}-${y}`}>
        <circle cx={x} cy={y} r="5" fill="#a0a8bd" />
        <circle cx={x} cy={y} r="3.600" fill="none" stroke="#d5d9e3" strokeWidth=".6" />
      </g>
    ))}
    <circle cx="14" cy="14" r="2.400" fill="none" stroke="#fff" strokeWidth=".8" />
    <circle cx="14" cy="14" r=".8" fill="#fff" />
  </svg>
);

const GamepadIcon = () => (
  <svg viewBox="0 0 28 14" className="h-3.5 w-7" aria-hidden="true">
    <rect width="28" height="14" rx="5.500" fill="#a0a8bd" />
    <path d="M8 3.500v7M4.500 7h7" stroke="#fff" strokeWidth="1.400" />
    <g fill="#fff">
      <circle cx="18.500" cy="5" r="1" />
      <circle cx="19" cy="9" r="1" />
      <circle cx="22" cy="8" r="1" />
    </g>
  </svg>
);

const CarIcon = () => (
  <svg viewBox="0 0 28 23" className="h-[23px] w-7" aria-hidden="true">
    <path fillRule="evenodd" d="M8 0h12c2 0 3 1 3.600 2.800L25 7.500l2.500-.5.500 2-1.500.8c1 1 1.500 2.200 1.500 3.700V22a1 1 0 0 1-1 1h-2.500a1 1 0 0 1-1-1v-2.500h-19V22a1 1 0 0 1-1 1H1.500a1 1 0 0 1-1-1v-8.500c0-1.500.5-2.700 1.500-3.700L0 9l.5-2 2.500.5 1.400-4.700C5 1 6 0 8 0zm0 2c-1 0-1.400.5-1.700 1.400L5 8h18l-1.300-4.600C21.400 2.500 21 2 20 2zM6 13a1.800 1.800 0 1 0 0 3.600A1.800 1.800 0 0 0 6 13zm16 0a1.800 1.800 0 1 0 0 3.600 1.800 1.800 0 0 0 0-3.600zm-11 .8v2h6v-2z" fill="#a0a8bd" />
  </svg>
);

const stroke = { fill: "none", stroke: "#333", strokeWidth: 1.3 } as const;

const HomeIcon = () => (
  <svg viewBox="0 0 18 18" className="h-[18px] w-[18px] shrink-0" {...stroke} stroke="#111" strokeWidth={1.6} aria-hidden="true">
    <path d="M.8 9.500L9 1.200l8.200 8.300M3.500 8v9h11V8M7 17v-5.500h4V17M13.500 5V2" />
  </svg>
);
const PagesIcon = () => (
  <svg viewBox="0 0 20 18" className="h-[18px] w-5" {...stroke} strokeWidth={1} aria-hidden="true">
    <path d="M.5.5h8v17h-8zM11.500.5h8v17h-8z" />
  </svg>
);
const LensIcon = ({ plus = false }: { plus?: boolean }) => (
  <svg viewBox="0 0 18 18" className="h-[18px] w-[18px]" {...stroke} stroke={plus ? "#000" : "#333"} strokeWidth={plus ? 1.8 : 1.4} aria-hidden="true">
    <circle cx="8" cy="8" r="6.800" />
    <path d="M13 13l4 4" strokeWidth={2.2} />
    <path d={plus ? "M8 4.800v6.400M4.800 8h6.400" : "M5 8h6"} />
  </svg>
);
const FitIcon = () => (
  <svg viewBox="0 0 18 18" className="h-[18px] w-[18px]" {...stroke} strokeWidth={1.2} aria-hidden="true">
    <path d="M1.500 5V3A1.500 1.500 0 0 1 3 1.500H5M13 1.500h2A1.500 1.500 0 0 1 16.500 3V5M16.500 13v2a1.500 1.500 0 0 1-1.500 1.500H13M5 16.500H3A1.500 1.500 0 0 1 1.500 15V13" />
    <circle cx="9" cy="9" r="4.800" />
  </svg>
);
const RotateIcon = ({ flip = false }: { flip?: boolean }) => (
  <svg viewBox="0 0 20 20" className="h-5 w-5" {...stroke} strokeWidth={1.6} aria-hidden="true">
    <g transform={flip ? "matrix(-1 0 0 1 20 0)" : undefined}>
      <rect x="1.500" y="8" width="15" height="11" rx="1.500" />
      <path d="M8 3.500c5-.8 8.500.5 9.500 4M10.500.8L7.800 3.600l3 2.400" />
    </g>
  </svg>
);
const RollerIcon = () => (
  <svg viewBox="0 0 18 20" className="h-5 w-[18px]" {...stroke} strokeWidth={1.4} aria-hidden="true">
    <rect x="1.500" y="1.700" width="12" height="5" />
    <path d="M13.500 3h2.800v6.500H8V13" />
    <rect x="6.500" y="13" width="3" height="6" />
  </svg>
);
const MirrorIcon = () => (
  <svg viewBox="0 0 20 18" className="h-[18px] w-5" {...stroke} aria-hidden="true">
    <path d="M1.500 1.500c3 1 5 2.500 5 4v7c0 1.500-2 3-5 4zM18.500 1.500c-3 1-5 2.500-5 4v7c0 1.500 2 3 5 4zM10 0v18" />
  </svg>
);
const LampIcon = () => (
  <svg viewBox="0 0 20 20" className="h-5 w-5" fill="none" stroke="#f00" strokeWidth="1.400" aria-hidden="true">
    <path d="M10 1v2.500M1.500 11.500C1.500 7 5 3.500 10 3.500s8.500 3.500 8.500 8zM.5 11.500h19M6 12c.5 2.200 2 3 4 3s3.500-.8 4-3" />
    <path d="M6.500 15.500L5.500 18M13.500 15.500l1 2.500M10 16.500V19M4 14l-2 1.500M16 14l2 1.500" />
    <path d="M5 9c.5-1.500 1.500-2.500 3-3" strokeWidth="1" />
  </svg>
);
const DiodeIcon = () => (
  <svg viewBox="0 0 24 20" className="h-5 w-6" aria-hidden="true">
    <path d="M0 10h24M19.500 4v12" stroke="#4a90ff" strokeWidth="1.400" />
    <path d="M8 4l11 6-11 6z" fill="#4a90ff" />
  </svg>
);
const NetIcon = () => (
  <svg viewBox="0 0 20 20" className="h-5 w-5" fill="none" strokeWidth="1.400" aria-hidden="true">
    <rect x="1" y="1" width="18" height="18" rx="2.500" stroke="#445" strokeWidth="1.200" />
    <path d="M8.500 7L18 18" stroke="#12b34a" />
    <circle cx="7.500" cy="5.700" r="1.700" stroke="#12b34a" />
    <path d="M15 6.500c3 .5 1.500 3.500 4 4.500M10 2.500l2 1.500" stroke="#4a90ff" />
    <circle cx="13.500" cy="5.500" r="1.600" stroke="#4a90ff" />
    <path d="M2 17c3 0 2-3 5-3s2.500 3 5.500 3M2 11l2 .5" stroke="#f22" />
    <circle cx="5.500" cy="11.500" r="1.600" stroke="#f22" />
  </svg>
);
const CurveIcon = () => (
  <svg viewBox="0 0 20 20" className="h-5 w-5" {...stroke} stroke="#111" strokeWidth={1.5} aria-hidden="true">
    <path d="M3 15C4 8 8 4.500 15.500 4" />
    <circle cx="17" cy="3.500" r="1.800" />
    <circle cx="3" cy="16.500" r="1.800" />
  </svg>
);
const MouseIcon = () => (
  <svg viewBox="0 0 16 20" className="h-5 w-4" {...stroke} strokeWidth={1.5} aria-hidden="true">
    <rect x="1.500" y="1.500" width="13" height="17" rx="5.500" />
    <path d="M1.500 9h13M8 1.500V4M8 8v1" />
    <rect x="6.500" y="4" width="3" height="4" rx="1.500" />
  </svg>
);
const CloseAllIcon = () => (
  <svg viewBox="0 0 18 18" className="h-[18px] w-[18px]" aria-hidden="true">
    <path d="M1 14V2a1 1 0 0 1 1-1h13" fill="none" stroke="#777" strokeWidth="2" />
    <rect x="4" y="4" width="14" height="14" rx="2" fill="#777" />
    <path d="M8 8l6 6M14 8l-6 6" stroke="#fff" strokeWidth="1.500" />
  </svg>
);
const PanelIcon = () => (
  <svg viewBox="0 0 22 18" className="h-[18px] w-[22px]" fill="none" stroke="#707070" aria-hidden="true">
    <rect x="1" y="1" width="20" height="16" strokeWidth="1.600" />
    <path d="M7 1v16" strokeWidth="1.600" />
    <path d="M11 5H17M11 8H17M11 10.500H17M11 13.500H17" strokeWidth="1.300" />
  </svg>
);
const CaseIcon = () => (
  <svg viewBox="0 0 16 16" className="h-4 w-4" fill="none" stroke="#e6e23c" strokeWidth="1.300" aria-hidden="true">
    <rect x=".7" y="4" width="14.600" height="11.300" rx="1.500" />
    <path d="M4.500 4V1.500a.8.8 0 0 1 .8-.8h5.400a.8.8 0 0 1 .8.8V4M3.500 8.500h9" />
  </svg>
);

/* ------------------------------------------------------------------ */
/* Tree                                                                */
/* ------------------------------------------------------------------ */

type Node = { kind: "model" | "group" | "pdf" | "pcb"; name: string; active?: boolean };

const TREE: Node[] = [
  { kind: "group", name: "Schematic and boardview" },
  { kind: "pdf", name: "OPPO A7N Location map.pdf" },
  { kind: "pdf", name: "OPPO A7N Schematic diagram.pdf" },
  { kind: "model", name: "A7X" },
  { kind: "group", name: "Repair Case" },
  { kind: "pdf", name: "Oppo a7x slams without baseband.pdf" },
  { kind: "pdf", name: "Oppo a7x sometimes not available.pdf" },
  { kind: "pdf", name: "Oppoa7x water inlet backlight problem.pdf" },
  { kind: "group", name: "Schematic and boardview" },
  { kind: "pdf", name: "A7X-2BD120 Physical location map.pdf" },
  { kind: "pdf", name: "A7X-2BD120 Physical scanning image.pdf" },
  { kind: "pcb", name: "A7X-2BD120.pcb" },
  { kind: "model", name: "A7Y" },
  { kind: "group", name: "Schematic and boardview" },
  { kind: "pdf", name: "OPPO A7Y Bitmap.pdf" },
  { kind: "pdf", name: "OPPO A7Y Schematic diagram.pdf" },
  { kind: "model", name: "A8" },
  { kind: "group", name: "Schematic and boardview" },
  { kind: "pdf", name: "A8 2FA149 Physical location map.pdf" },
  { kind: "pdf", name: "A8 2FA149 Physical scanning image.pdf" },
  { kind: "pcb", name: "A8 2FA149 YiDianTong.pcb", active: true },
  { kind: "pdf", name: "A8 2FA149-0 location.pdf" },
  { kind: "pdf", name: "A8 2FA149-0 schematic.pdf" },
  { kind: "model", name: "A9" },
  { kind: "group", name: "Repair Case" },
  { kind: "pdf", name: "OPPO A9 has no ring tone.pdf" },
  { kind: "pdf", name: "Oppo A9 does not start when water.pdf" },
  { kind: "pdf", name: "Oppopo A9 startup and fixed screen.pdf" },
  { kind: "group", name: "Schematic and boardview" },
  { kind: "pcb", name: "A9 2CC116.pcb" },
  { kind: "pdf", name: "A9 Component notes.pdf" },
];

function TreeRow({ node }: { node: Node }) {
  if (node.kind === "model" || node.kind === "group")
    return (
      <li className={node.kind === "model" ? "flex h-6 pl-[61px]" : "flex h-6 pl-[81px]"}>
        <button className="flex items-center gap-1.5 whitespace-nowrap" aria-expanded="true">
          <Minus />
          {node.name}
        </button>
      </li>
    );
  return (
    <li className="flex h-6 pl-[103px]">
      <button className={node.active ? "flex min-w-0 items-center gap-1 text-[#4f94ff]" : "flex min-w-0 items-center gap-1"}>
        {node.kind === "pdf" ? <PdfIcon /> : <PcbIcon />}
        <span className="overflow-hidden whitespace-nowrap">{node.name}</span>
      </button>
    </li>
  );
}

function RailItem({ icon, label, active = false }: { icon: React.ReactNode; label: string; active?: boolean }) {
  return (
    <button className={active ? "flex h-[60px] flex-col items-center text-[#3b9cff]" : "flex h-[60px] flex-col items-center text-[#6d7587]"}>
      <span className="flex h-8 items-center pb-0.5 text-[28px] text-[#a0a8bd]">{icon}</span>
      <span className="leading-5">{label}</span>
    </button>
  );
}

const Sep = () => <span className="mx-[3px] h-5 w-px shrink-0 bg-[#c4c4c4]" />;
const Gap = () => <span className="w-0.5 shrink-0" />;

function Tool({ label, on = false, children }: { label: string; on?: boolean; children: React.ReactNode }) {
  return (
    <button
      aria-label={label}
      title={label}
      className={on ? "flex h-6 w-6 shrink-0 items-center justify-center bg-[#b5d2ff]" : "flex h-6 w-6 shrink-0 items-center justify-center"}
    >
      {children}
    </button>
  );
}

const Handle = () => (
  <svg viewBox="0 0 9 110" className="h-[110px] w-[9px]" aria-hidden="true">
    <path d="M0 0L8.500 14V96L0 110z" fill="#d6eaff" stroke="#9fd0f8" />
    <path d="M5.500 51L3 54l2.500 3" fill="none" stroke="#4da6f0" strokeWidth="1.200" />
  </svg>
);

export default function App() {
  return (
    <div className="flex h-screen flex-col overflow-hidden bg-white font-['Noto_Sans','Open_Sans',sans-serif] text-sm text-black">
      <header className="flex h-10 shrink-0 items-center bg-[linear-gradient(90deg,#1fa8fb_0%,#2e78fd_14%,#2f72fd_35%,#2e86fd_65%,#2b9cff_100%)] pl-[13px] pr-[17px] text-white">
        <Logo />
        <h1 className="ml-[13px] flex-1 whitespace-nowrap">XZZ Schematics V4.77 [ VIP Due date: 2025-10-30 17:50:47 ]</h1>
        <div className="flex items-center">
          <button aria-label="Tool case"><CaseIcon /></button>
          <span className="ml-[11px] mr-3 h-5 w-px bg-white/40" />
          <button aria-label="Minimize">
            <svg viewBox="0 0 16 16" className="h-4 w-4" stroke="#fff" strokeWidth="2"><path d="M0 8h16" /></svg>
          </button>
          <button aria-label="Maximize" className="mx-3.5">
            <svg viewBox="0 0 16 16" className="h-4 w-4" fill="none" stroke="#fff" strokeWidth="1.400"><rect x=".7" y=".7" width="14.600" height="14.600" rx="3" /></svg>
          </button>
          <button aria-label="Close">
            <svg viewBox="0 0 16 16" className="h-4 w-4" stroke="#fff" strokeWidth="1.500"><path d="M.5.5l15 15M15.500.5l-15 15" /></svg>
          </button>
        </div>
      </header>

      <nav className="flex h-8 shrink-0 items-center gap-4 border-b border-[#dadada] bg-[#f0f0f0] px-[18px] pt-0.5">
        {["File(F)", "VIP(V)", "Tool(T)", "Settings(S)", "PCB View settings(S)"].map((m) => (
          <button key={m}>{m}</button>
        ))}
      </nav>

      <div className="flex min-h-0 flex-1">
        <aside className="flex w-[431px] shrink-0 flex-col border-r border-[#dadada]">
          <form className="flex h-10 shrink-0 items-center border-b border-[#dadada] px-[5px]">
            <button type="button" className="h-[30px] w-[49px] rounded border border-[#dcdcdc]">Shrink</button>
            <label className="ml-2.5 flex h-[30px] min-w-0 flex-1 items-center rounded border border-[#dcdcdc] pl-2 pr-2">
              <input
                aria-label="Search"
                placeholder="Please input the model number or PCB"
                className="min-w-0 flex-1 outline-none placeholder:text-[#c0c4cc]"
              />
              <svg viewBox="0 0 14 8" className="h-2 w-3.5 shrink-0" fill="none" stroke="#a8abb2" strokeWidth="1.500" aria-hidden="true">
                <path d="M1 1l6 6 6-6" />
              </svg>
            </label>
            <button type="button" aria-label="Search" className="ml-2.5 flex h-[30px] w-[49px] items-center justify-center rounded-[3px] bg-[#4f94ff] text-white">
              <svg viewBox="0 0 20 20" className="h-5 w-5" fill="none" stroke="currentColor" strokeWidth="1.500" aria-hidden="true">
                <circle cx="10" cy="10" r="8.500" />
                <path d="M15.500 15.500L19 19" />
              </svg>
            </button>
          </form>

          <div className="flex min-h-0 flex-1">
            <div className="flex w-[74px] shrink-0 flex-col items-center overflow-hidden pt-[3px]">
              <fieldset className="flex w-14 flex-col rounded-lg border-2 border-dashed border-[#2f97f7] pb-0.5">
                <legend className="mx-auto h-4 leading-4 text-[#3b9cff]">VIP</legend>
                <div className="flex flex-col items-center gap-2.5 pt-[13px]">
                  <RailItem icon={<FaPlayCircle />} label="Cour..." />
                  <RailItem icon={<PhoneIcon />} label="Phone" active />
                  <RailItem icon={<LaptopIcon />} label="Com..." />
                </div>
              </fieldset>
              <fieldset className="mt-[27px] flex w-14 min-w-0 flex-col rounded-lg border-2 border-dashed border-[#6d7587] pb-0.5">
                <legend className="mx-auto h-4 leading-4 text-[#6d7587]">Custom</legend>
                <div className="flex flex-col items-center gap-2.5 pt-[13px]">
                  <RailItem icon={<DroneIcon />} label="Drone" />
                  <RailItem icon={<GamepadIcon />} label="Gam..." />
                  <RailItem icon={<CarIcon />} label="Car" />
                </div>
              </fieldset>
              <div className="mt-[22px]">
                <RailItem icon={<FaStar />} label="Favorites" />
              </div>
            </div>

            <div className="flex min-w-0 flex-1 bg-[linear-gradient(90deg,#d8e0f0_0px,#e6ebf4_12px,#f8f8f8_34px)]">
              <div className="min-w-0 flex-1 overflow-hidden pr-3">
                <ul className="-mt-[17px]">
                  {TREE.map((n, i) => (
                    <TreeRow key={i} node={n} />
                  ))}
                </ul>
              </div>
              <div className="flex w-3 shrink-0 flex-col items-center bg-[#f0f0f0]">
                <svg viewBox="0 0 10 6" className="mt-1.5 h-1.5 w-2.5" fill="none" stroke="#555" aria-hidden="true">
                  <path d="M1 5l4-4 4 4" />
                </svg>
                <div className="mt-[204px] h-[49px] w-2.5 rounded-full bg-[#646464]" />
              </div>
            </div>
          </div>
        </aside>

        <button aria-label="Collapse file list" className="flex w-[9px] shrink-0 items-start bg-[#fafff7] pt-[337px]">
          <Handle />
        </button>

        <main className="flex min-w-0 flex-1 flex-col border-l border-[#dadada]">
          <div className="flex h-[34px] shrink-0 items-center gap-[5px] border-b border-[#dadada] bg-[#fafafa] pl-2 pr-[11px]">
            <button className="flex h-6 w-[139px] items-center gap-1 whitespace-nowrap rounded border border-[#777] px-[5px] text-[#808080]">
              <HomeIcon />
              Member Center
            </button>
            <button className="h-6 w-[222px] whitespace-nowrap rounded border border-black bg-white font-bold">A8 2FA149 YiDianTong.pcb</button>
            <button aria-label="Close all tabs" className="ml-auto"><CloseAllIcon /></button>
          </div>

          <div className="flex min-h-0 flex-1">
            <div className="flex min-w-0 flex-1 flex-col">
              <div className="flex h-[26px] shrink-0 items-center bg-[#fafafa] pl-[5px] pr-1.5">
                <Tool label="Split view"><PagesIcon /></Tool>
                <Sep />
                <Tool label="Zoom in"><LensIcon plus /></Tool>
                <Gap />
                <Tool label="Zoom out"><LensIcon /></Tool>
                <Sep />
                <Tool label="Fit"><FitIcon /></Tool>
                <Sep />
                <Tool label="Rotate left"><RotateIcon /></Tool>
                <Gap />
                <Tool label="Rotate right"><RotateIcon flip /></Tool>
                <Sep />
                <Tool label="Colours"><RollerIcon /></Tool>
                <Sep />
                <Tool label="Mirror"><MirrorIcon /></Tool>
                <Gap />
                <Tool label="Light" on><LampIcon /></Tool>
                <button className="w-7 shrink-0 text-center">3D</button>
                <Tool label="Diode values" on><DiodeIcon /></Tool>
                <Gap />
                <Tool label="Nets" on><NetIcon /></Tool>
                <Gap />
                <Tool label="Trace"><CurveIcon /></Tool>
                <Sep />
                <Tool label="Mouse"><MouseIcon /></Tool>
                <Sep />
                <button className="h-[22px] w-[109px] shrink-0 border border-[#f00] bg-white leading-5">[ColorScheme]</button>
                <Sep />
                <Tool label="Show"><Eye className="h-5 w-5 text-[#4a8cee]" strokeWidth={1.6} /></Tool>
                <button aria-label="Side panel" className="ml-auto"><PanelIcon /></button>
              </div>
              <div className="min-h-0 flex-1 bg-white">
                <BoardView />
              </div>
            </div>
            <button aria-label="Expand side panel" className="flex w-[10px] shrink-0 items-start justify-end overflow-hidden border-l border-[#dadada] bg-[#fafafa] pt-[325px]">
              <svg viewBox="0 0 9 110" className="h-[110px] w-[9px]" aria-hidden="true">
                <path d="M9 0L.5 14V96L9 110z" fill="#d6eaff" stroke="#9fd0f8" />
                <path d="M6 54L3.500 57l2.500 3" fill="none" stroke="#4da6f0" strokeWidth="1.200" />
              </svg>
            </button>
          </div>
        </main>
      </div>

      <footer className="flex h-5 shrink-0 items-center justify-center bg-[#0491da] font-['DejaVu_Sans_Mono',monospace] text-[15px] leading-5 text-white">
        XZZ Schematics https://www.xzztools.com
      </footer>
    </div>
  );
}
